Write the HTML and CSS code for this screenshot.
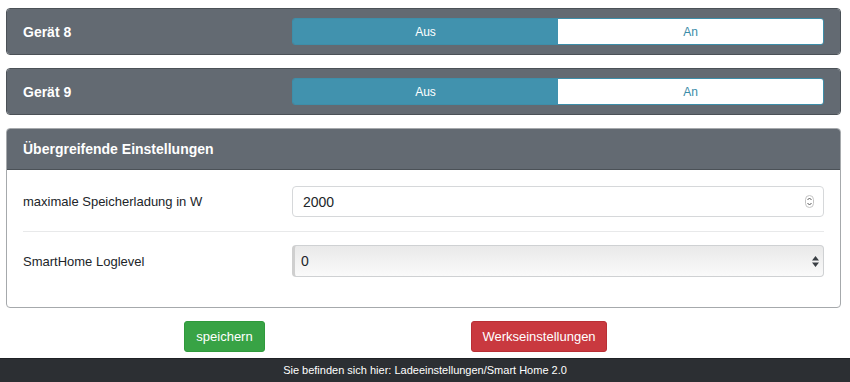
FILE: index.html
```html
<!DOCTYPE html>
<html lang="de">
<head>
    <meta charset="UTF-8">
    <meta name="viewport" content="width=device-width, initial-scale=1.0">
    <title>Smart Home 2.0</title>
    <link rel="stylesheet" href="styles.css">
</head>
<body>
    <div class="page">
        <div class="card card-device">
            <div class="card-header device-header">
                <span class="device-name">Gerät 8</span>
                <div class="btn-group">
                    <button class="toggle active">Aus</button>
                    <button class="toggle">An</button>
                </div>
            </div>
        </div>

        <div class="card card-device">
            <div class="card-header device-header">
                <span class="device-name">Gerät 9</span>
                <div class="btn-group">
                    <button class="toggle active">Aus</button>
                    <button class="toggle">An</button>
                </div>
            </div>
        </div>

        <div class="card">
            <div class="card-header">Übergreifende Einstellungen</div>
            <div class="card-body">
                <div class="form-row">
                    <label class="form-label">maximale Speicherladung in W</label>
                    <div class="field">
                        <input class="form-control" type="text" value="2000">
                        <svg class="spinner" width="9" height="13" viewBox="0 0 9 13">
                            <rect x="0.5" y="0.5" width="8" height="12" rx="4" fill="#fff" stroke="#c4c4c4"/>
                            <path d="M2.5 5 L4.5 3 L6.5 5 M2.5 8 L4.5 10 L6.5 8" fill="none" stroke="#555" stroke-width="1"/>
                        </svg>
                    </div>
                </div>
                <div class="form-row">
                    <label class="form-label">SmartHome Loglevel</label>
                    <div class="field">
                        <select class="form-select">
                            <option>0</option>
                        </select>
                        <svg class="select-arrows" width="7" height="11" viewBox="0 0 7 11">
                            <path d="M3.5 0 L7 4.5 H0 Z M3.5 11 L7 6.5 H0 Z" fill="#3a3f44"/>
                        </svg>
                    </div>
                </div>
            </div>
        </div>

        <div class="actions">
            <button class="btn btn-success">speichern</button>
            <button class="btn btn-danger">Werkseinstellungen</button>
        </div>
    </div>

    <footer class="footer">Sie befinden sich hier: Ladeeinstellungen/Smart Home 2.0</footer>
</body>
</html>
```

FILE: styles.css
```css
html, body {
    margin: 0;
    padding: 0;
    height: 100%;
    background-color: #fff;
    color: #212529;
    font-family: 'Liberation Sans', Arial, sans-serif;
    font-size: 13px;
    overflow: hidden;
}

.page {
    padding: 8px 9px 0 6px;
}

.card {
    border: 1px solid #a6a9ac;
    border-radius: 4px;
    margin-bottom: 13px;
    background-color: #fff;
    overflow: hidden;
}

.card-device {
    border-color: #4b5157;
}

.card-header {
    background-color: #636a72;
    color: #fff;
    font-weight: bold;
    font-size: 14px;
    padding: 0 16px;
    height: 40px;
    line-height: 40px;
    border-bottom: 1px solid #4b5157;
}

.device-header {
    display: grid;
    grid-template-columns: 269px 1fr;
    align-items: center;
    height: 45px;
    line-height: normal;
    border-bottom: none;
}

.btn-group {
    display: flex;
    height: 25px;
    border: 1px solid #3d8ea9;
    border-radius: 3px;
    overflow: hidden;
}

.toggle {
    flex: 1;
    border: none;
    margin: 0;
    padding: 0;
    font-family: inherit;
    font-size: 12px;
    background-color: #fff;
    color: #3a8ca8;
}

.toggle.active {
    background-color: #4192ae;
    color: #fff;
}

.card-body {
    padding: 16px 16px 30px;
}

.form-row {
    display: grid;
    grid-template-columns: 269px 1fr;
    align-items: center;
}

.form-row + .form-row {
    border-top: 1px solid #e8e9ea;
    margin-top: 14px;
    padding-top: 13px;
}

.field {
    position: relative;
}

.form-control,
.form-select {
    display: block;
    box-sizing: border-box;
    width: 100%;
    height: 31px;
    margin: 0;
    padding: 0 10px;
    font-family: inherit;
    font-size: 14px;
    color: #212529;
    border: 1px solid #d6d8da;
    border-radius: 4px;
    background-color: #fff;
}

.form-select {
    height: 32px;
    appearance: none;
    -webkit-appearance: none;
    border-color: #cfd1d3;
    border-left: 3px solid #cfcfcf;
    padding-left: 6px;
    background-image: linear-gradient(#e9e9e9, #fafafa);
}

.spinner {
    position: absolute;
    right: 10px;
    top: 9px;
}

.select-arrows {
    position: absolute;
    right: 5px;
    top: 11px;
}

.actions {
    display: flex;
    gap: 206px;
    padding-left: 178px;
    margin-top: 13px;
}

.btn {
    height: 31px;
    padding: 0 9px;
    border-radius: 3px;
    font-family: inherit;
    font-size: 13px;
    color: #fff;
    border: 1px solid transparent;
}

.btn-success {
    background-color: #38a345;
    border-color: #2f9a3c;
    width: 81px;
}

.btn-danger {
    background-color: #c9393f;
    border-color: #b92f35;
    width: 136px;
}

.footer {
    position: absolute;
    left: 0;
    right: 0;
    bottom: 0;
    height: 23px;
    line-height: 23px;
    background-color: #2c2f33;
    border-top: 1px solid #1f2225;
    color: #fff;
    font-size: 11px;
    text-align: center;
}
```
